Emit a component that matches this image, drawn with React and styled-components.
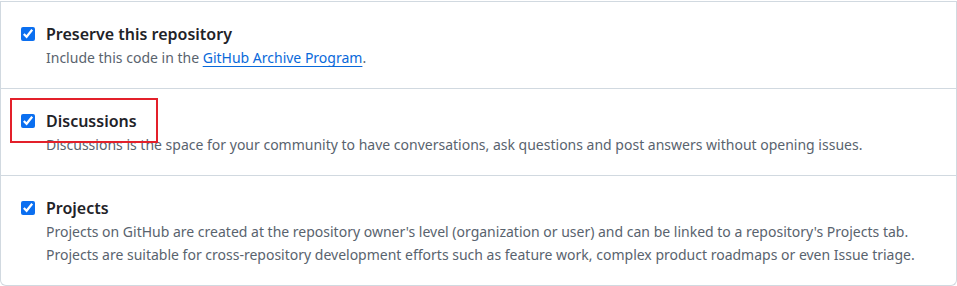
import React from "react";
import styled, { createGlobalStyle } from "styled-components";

const Global = createGlobalStyle`
  html, body { margin: 0; padding: 0; background: #ffffff; }
  body { font-family: "Noto Sans", "Open Sans", sans-serif; }
`;

const Page = styled.div`
  padding-top: 1px;
  width: 957px;
`;

const Box = styled.div`
  border: 1px solid #d1d9e0;
  border-top: none;
  border-radius: 0 0 6px 6px;
  background: #ffffff;
`;

const Row = styled.div`
  position: relative;
  display: grid;
  grid-template-columns: 14px 1fr;
  column-gap: 11px;
  padding: 20px 16px 19px 20px;
  border-top: 1px solid #d1d9e0;
`;

const Check = styled.input.attrs({ type: "checkbox" })`
  width: 14px;
  height: 14px;
  margin: 5px 0 0 0;
  accent-color: #0b6ff0;
`;

const Body = styled.div`
  display: flex;
  flex-direction: column;
`;

const Title = styled.label`
  font-size: 16px;
  line-height: 24px;
  font-weight: 600;
  color: #1f2328;
`;

const Desc = styled.p`
  margin: 0;
  font-size: 14px;
  line-height: 23px;
  color: #59636e;
`;

const Link = styled.a`
  color: #0969da;
  text-decoration: underline;
  text-underline-offset: 3px;
`;

const Highlight = styled.div`
  position: absolute;
  left: 9px;
  top: 9px;
  width: 148px;
  height: 45px;
  box-sizing: border-box;
  border: 2px solid #e3202a;
  pointer-events: none;
`;

const items = [
  {
    id: "preserve",
    title: "Preserve this repository",
    desc: (
      <>
        Include this code in the <Link href="#">GitHub Archive Program</Link>.
      </>
    ),
  },
  {
    id: "discussions",
    title: "Discussions",
    highlight: true,
    desc:
      "Discussions is the space for your community to have conversations, ask questions and post answers without opening issues.",
  },
  {
    id: "projects",
    title: "Projects",
    desc: (
      <>
        Projects on GitHub are created at the repository owner's level (organization or user) and can be linked to a repository's Projects tab.
        Projects are suitable for cross-repository development efforts such as feature work, complex product roadmaps or even Issue triage.
      </>
    ),
  },
];

export default function App() {
  return (
    <>
      <Global />
      <Page>
        <Box>
          {items.map((it) => (
            <Row key={it.id}>
              <Check id={it.id} defaultChecked />
              <Body>
                <Title htmlFor={it.id}>{it.title}</Title>
                <Desc>{it.desc}</Desc>
              </Body>
              {it.highlight && <Highlight />}
            </Row>
          ))}
        </Box>
      </Page>
    </>
  );
}
